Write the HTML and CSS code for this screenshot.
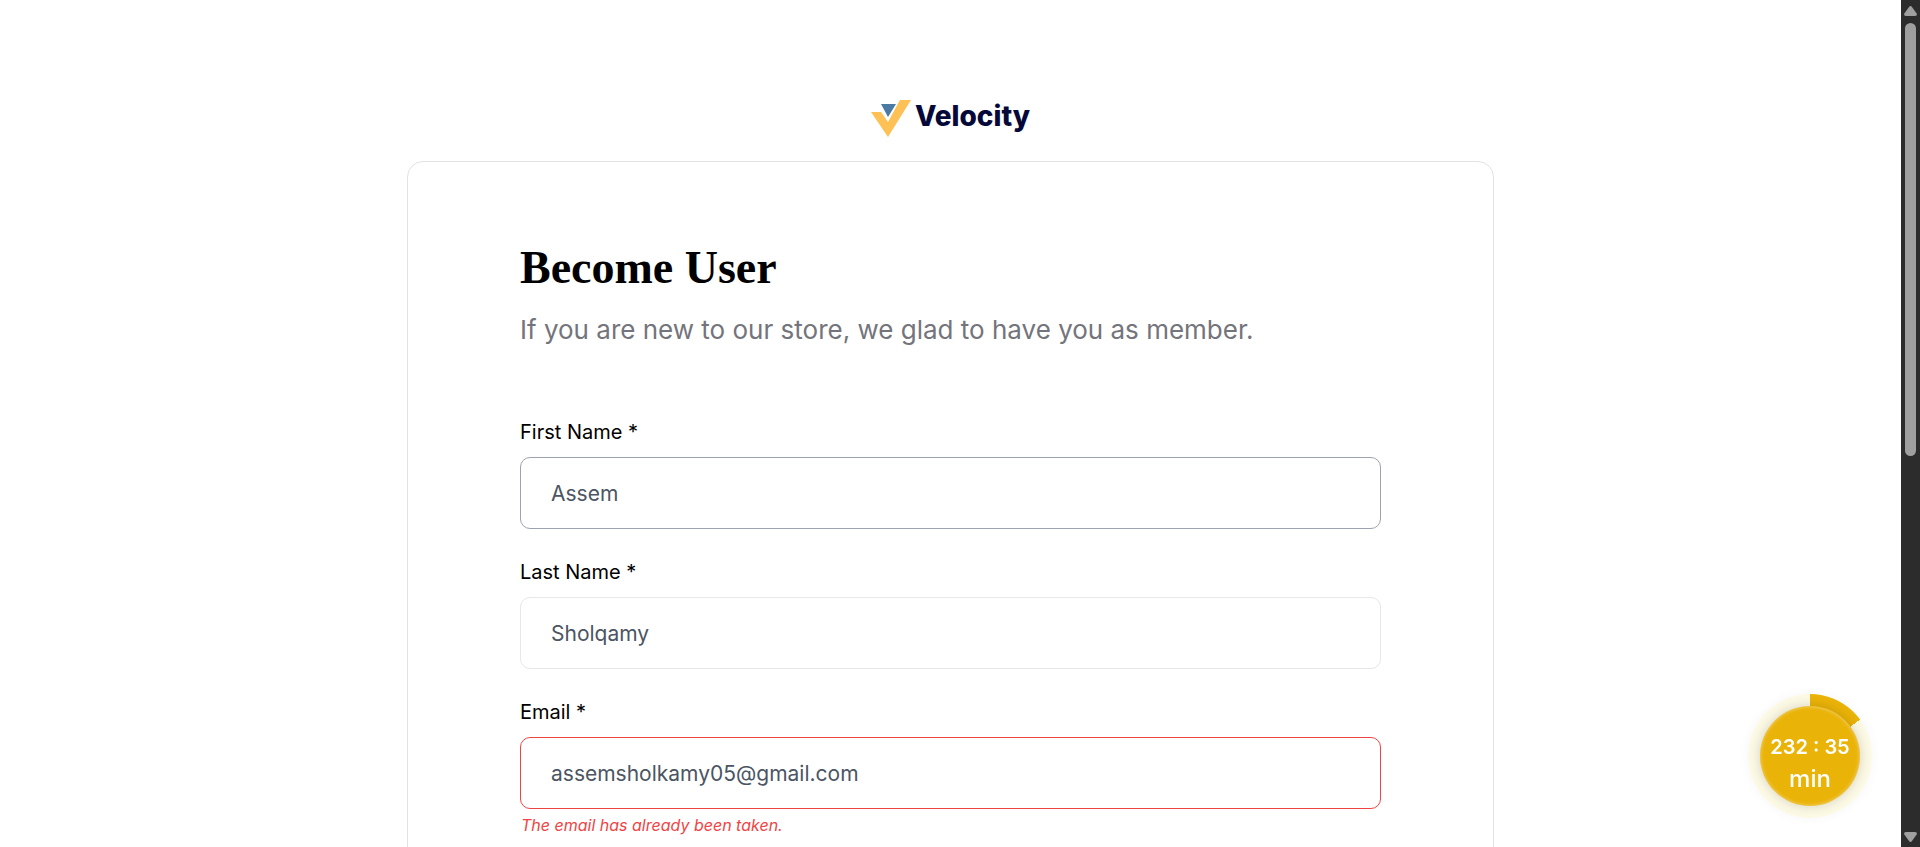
FILE: index.html
```html
<!DOCTYPE html>
<html lang="en">
<head>
<meta charset="utf-8">
<meta name="viewport" content="width=device-width, initial-scale=1">
<title>Become User - Velocity</title>
<link rel="stylesheet" href="styles.css">
</head>
<body>
<div class="window">
  <main class="page">
    <a class="logo" href="#">
      <svg class="logo-mark" viewBox="0 0 40 37" aria-hidden="true">
        <path fill="#fec155" d="M0 12h10l7 10L29 0h11L17 37z"/>
        <path fill="#4b7ba5" d="M10 4h15l-8 13z"/>
      </svg>
      <span class="logo-name">Velocity</span>
    </a>
    <section class="card">
      <h1 class="title">Become User</h1>
      <p class="subtitle">If you are new to our store, we glad to have you as member.</p>
      <form class="form">
        <div class="field">
          <label class="label" for="first-name">First Name *</label>
          <input class="input input-active" id="first-name" type="text" value="Assem">
        </div>
        <div class="field">
          <label class="label" for="last-name">Last Name *</label>
          <input class="input" id="last-name" type="text" value="Sholqamy">
        </div>
        <div class="field">
          <label class="label" for="email">Email *</label>
          <input class="input input-error" id="email" type="email" value="assemsholkamy05@gmail.com" aria-describedby="email-error">
          <p class="error" id="email-error">The email has already been taken.</p>
        </div>
      </form>
    </section>
  </main>
  <div class="scrollbar" aria-hidden="true">
    <svg class="arrow" viewBox="0 0 13 10"><path fill="#9f9f9f" d="M5 1Q6.500-1 8 1l5 7q0 2-2 2H2Q0 10 0 8z"/></svg>
    <div class="track"><div class="thumb"></div></div>
    <svg class="arrow" viewBox="0 0 13 10"><path fill="#9f9f9f" d="M5 9Q6.500 11 8 9l5-7q0-2-2-2H2Q0 0 0 2z"/></svg>
  </div>
</div>
<div class="timer" role="timer">
  <div class="timer-face">
    <span class="timer-value">232 : 35</span>
    <span class="timer-unit">min</span>
  </div>
</div>
</body>
</html>
```
FILE: styles.css
```css
* {
  box-sizing: border-box;
}

body {
  margin: 0;
  background: #fff;
  color: #000;
  font-family: Inter, "Open Sans", sans-serif;
}

.window {
  display: flex;
  height: 100vh;
  overflow: hidden;
}

.page {
  flex: 1;
  display: flex;
  flex-direction: column;
  align-items: center;
  padding: 100px 24px 0;
}

.logo {
  display: flex;
  align-items: flex-start;
  gap: 4px;
  color: #040939;
  text-decoration: none;
}

.logo-mark {
  width: 40px;
  height: 37px;
}

.logo-name {
  font-size: 28px;
  line-height: 32px;
  font-weight: 800;
}

.card {
  width: 100%;
  max-width: 1087px;
  margin-top: 24px;
  padding: 78px 112px;
  border: 1px solid #e2e2e2;
  border-radius: 16px;
}

.title {
  margin: 0;
  font-family: "Liberation Serif", serif;
  font-size: 46px;
  line-height: 56px;
  font-weight: 700;
}

.subtitle {
  margin: 14px 0 67px;
  color: #74747c;
  font-size: 26px;
  line-height: 40px;
}

.form {
  display: grid;
  gap: 28px;
}

.field {
  display: flex;
  flex-direction: column;
}

.label {
  margin-bottom: 10px;
  font-size: 20px;
  line-height: 30px;
}

.input {
  width: 100%;
  height: 72px;
  padding: 0 30px;
  border: 1px solid #e5e7eb;
  border-radius: 10px;
  outline: 0;
  background: #fff;
  color: #4b5563;
  font: inherit;
  font-size: 21px;
}

.input-active {
  border-color: #9ca3af;
}

.input-error {
  border-color: #ef4444;
}

.error {
  margin: 4px 0 0;
  padding-left: 1px;
  color: #ef4444;
  font-size: 16px;
  line-height: 24px;
  font-style: italic;
}

.scrollbar {
  display: flex;
  flex-direction: column;
  align-items: center;
  gap: 7px;
  width: 19px;
  padding: 6px 0 5px;
  background: #2c2c2c;
}

.arrow {
  width: 13px;
  height: 10px;
}

.track {
  flex: 1;
  width: 11px;
}

.thumb {
  height: 54%;
  border-radius: 6px;
  background: #9f9f9f;
}

.timer {
  position: fixed;
  right: 48px;
  bottom: 29px;
  display: grid;
  place-items: center;
  width: 124px;
  height: 124px;
  border-radius: 50%;
  background: conic-gradient(#eab308 15%, #fcf9e5 15%);
  box-shadow: 0 0 12px rgba(0, 0, 0, 0.04);
}

.timer-face {
  display: flex;
  flex-direction: column;
  align-items: center;
  justify-content: center;
  width: 100px;
  height: 100px;
  padding-top: 14px;
  border-radius: 50%;
  background: #eab308;
  box-shadow: 0 0 12px rgba(0, 0, 0, 0.16), inset 0 0 4px rgba(255, 255, 255, 0.5);
  color: #fff;
  line-height: 32px;
}

.timer-value {
  font-size: 20px;
  font-weight: 600;
}

.timer-unit {
  font-size: 24px;
  font-weight: 500;
}
```
